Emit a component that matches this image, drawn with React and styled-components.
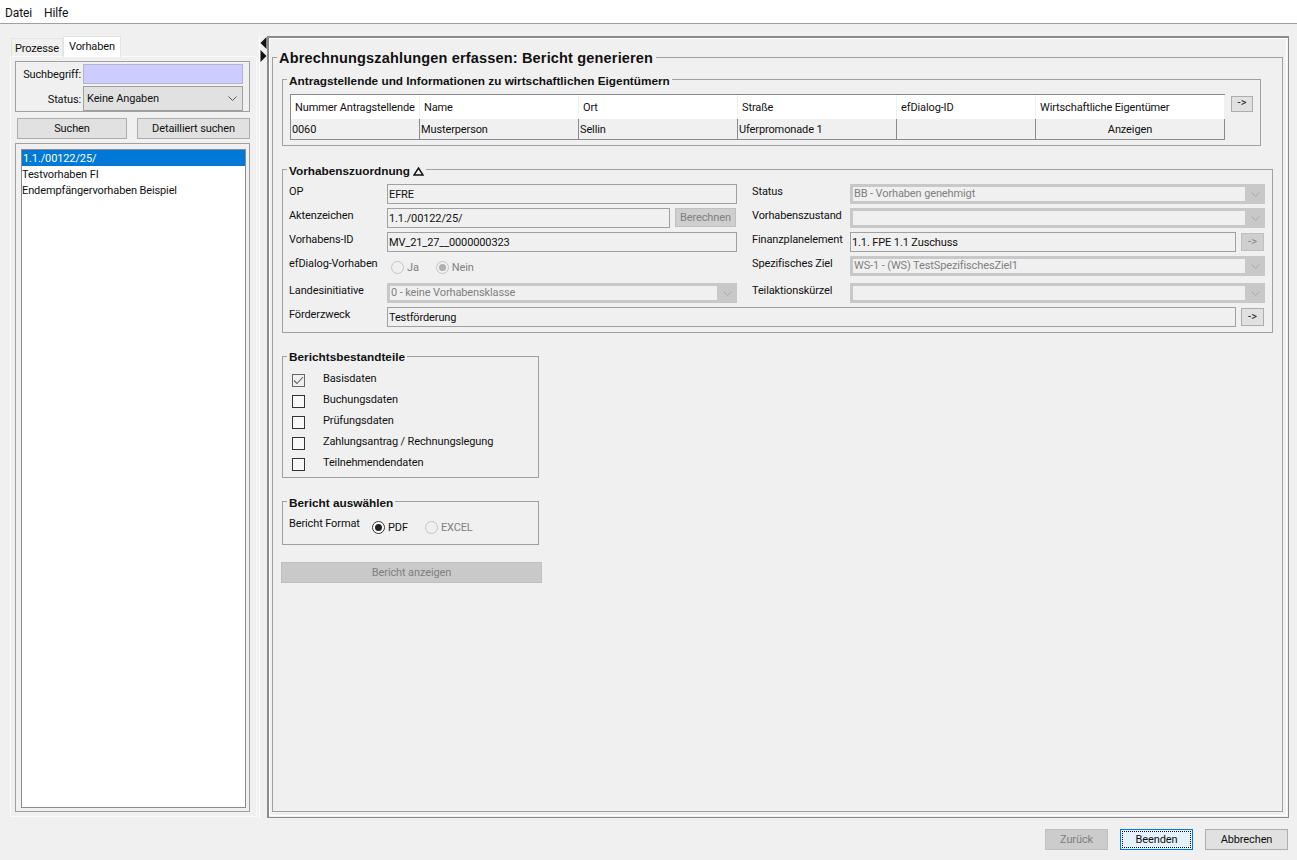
import React from 'react';
import styled, { createGlobalStyle } from 'styled-components';

const COLORS = {
  page: '#f0f0f0',
  line: '#a0a0a0',
  dark: '#8a8a90',
  field: '#c8c8c8',
  control: '#e1e1e1',
  muted: '#808080',
  text: '#111',
};

const TABLE_COLUMNS = [
  { id: 'nummer', label: 'Nummer Antragstellende', value: '0060', width: 129 },
  { id: 'name', label: 'Name', value: 'Musterperson', width: 159 },
  { id: 'ort', label: 'Ort', value: 'Sellin', width: 159 },
  { id: 'strasse', label: 'Straße', value: 'Uferpromonade 1', width: 159 },
  { id: 'dialog', label: 'efDialog-ID', value: '', width: 139 },
  { id: 'eigentuemer', label: 'Wirtschaftliche Eigentümer', value: 'Anzeigen', width: 189, center: true },
];

const REPORT_PARTS = [
  { label: 'Basisdaten', checked: true },
  { label: 'Buchungsdaten' },
  { label: 'Prüfungsdaten' },
  { label: 'Zahlungsantrag / Rechnungslegung' },
  { label: 'Teilnehmendendaten' },
];

const GlobalStyle = createGlobalStyle`
  html, body {
    margin: 0;
    padding: 0;
    background: ${COLORS.page};
  }
  body {
    font-family: Roboto, 'Liberation Sans', Arial, sans-serif;
    font-size: 11px;
    letter-spacing: -0.12px;
    color: ${COLORS.text};
  }
`;

const Chevron = ({ color = '#555' }) => (
  <svg width="9" height="5" viewBox="0 0 9 5" fill="none">
    <path d="M0.5 0.5 L4.5 4.5 L8.5 0.5" stroke={color} strokeWidth="1" />
  </svg>
);

const Check = () => (
  <svg width="11" height="9" viewBox="0 0 11 9" fill="none">
    <path d="M1 4.5 L4 7.5 L10 1" stroke="#606060" strokeWidth="1.1" />
  </svg>
);

const Delta = () => (
  <svg width="11" height="9" viewBox="0 0 11 9" fill="none">
    <path d="M5.5 1 L10 8 L1 8 Z" stroke="#111" strokeWidth="1.4" />
  </svg>
);

const Select = ({ value }) => (
  <SelectBox>
    <SelectValue>{value}</SelectValue>
    <SelectArrow>
      <Chevron color="#a8a8a8" />
    </SelectArrow>
  </SelectBox>
);

const Radio = ({ label, checked, disabled }) => (
  <RadioLabel disabled={disabled}>
    <RadioCircle disabled={disabled}>{checked && <RadioDot disabled={disabled} />}</RadioCircle>
    {label}
  </RadioLabel>
);

const App = () => (
  <Page>
    <GlobalStyle />
    <MenuBar>
      <MenuItem>Datei</MenuItem>
      <MenuItem>Hilfe</MenuItem>
    </MenuBar>

    <Main>
      <Sidebar>
        <Tabs>
          <Tab width={52}>Prozesse</Tab>
          <Tab width={58} active>Vorhaben</Tab>
        </Tabs>
        <TabBody>
          <SearchBox>
            <SearchRow>
              <SearchLabel>Suchbegriff:</SearchLabel>
              <SearchInput />
            </SearchRow>
            <SearchRow>
              <SearchLabel>Status:</SearchLabel>
              <StatusSelect>
                Keine Angaben
                <Chevron />
              </StatusSelect>
            </SearchRow>
          </SearchBox>
          <SearchButtons>
            <SideButton>Suchen</SideButton>
            <SideButton>Detailliert suchen</SideButton>
          </SearchButtons>
          <ListFrame>
            <List>
              <ListItem selected>1.1./00122/25/</ListItem>
              <ListItem>Testvorhaben FI</ListItem>
              <ListItem>Endempfängervorhaben Beispiel</ListItem>
            </List>
          </ListFrame>
        </TabBody>
      </Sidebar>

      <Splitter>
        <svg width="7" height="26" viewBox="0 0 7 26">
          <path d="M6.5 0 L6.5 12 L0.5 6 Z" fill="#111" />
          <path d="M0.5 13 L0.5 25 L6.5 19 Z" fill="#111" />
        </svg>
      </Splitter>

      <PageFrame>
        <PageInner>
          <TitledBox>
            <PageTitle>Abrechnungszahlungen erfassen: Bericht generieren</PageTitle>

            <OwnerGroup>
              <GroupTitle>Antragstellende und Informationen zu wirtschaftlichen Eigentümern</GroupTitle>
              <Table>
                <TableHead>
                  {TABLE_COLUMNS.map(({ id, label, width }) => (
                    <HeadCell key={id} style={{ width }}>{label}</HeadCell>
                  ))}
                </TableHead>
                <TableRow>
                  {TABLE_COLUMNS.map(({ id, value, width, center }) => (
                    <BodyCell key={id} center={center} style={{ width }}>{value}</BodyCell>
                  ))}
                </TableRow>
              </Table>
              <ArrowButton>-&gt;</ArrowButton>
            </OwnerGroup>

            <AssignGroup>
              <GroupTitle>Vorhabenszuordnung <Delta /></GroupTitle>
              <FormColumn>
                <FormRow>
                  <FieldLabel>OP</FieldLabel>
                  <TextField>EFRE</TextField>
                </FormRow>
                <FormRow>
                  <FieldLabel>Aktenzeichen</FieldLabel>
                  <TextField>1.1./00122/25/</TextField>
                  <CalcButton>Berechnen</CalcButton>
                </FormRow>
                <FormRow>
                  <FieldLabel>Vorhabens-ID</FieldLabel>
                  <TextField>MV_21_27__0000000323</TextField>
                </FormRow>
                <FormRow>
                  <FieldLabel>efDialog-Vorhaben</FieldLabel>
                  <RadioGroup>
                    <Radio label="Ja" disabled />
                    <Radio label="Nein" checked disabled />
                  </RadioGroup>
                </FormRow>
                <FormRow tall>
                  <FieldLabel>Landesinitiative</FieldLabel>
                  <Select value="0 - keine Vorhabensklasse" />
                </FormRow>
              </FormColumn>
              <FormColumn>
                <FormRow>
                  <FieldLabel>Status</FieldLabel>
                  <Select value="BB - Vorhaben genehmigt" />
                </FormRow>
                <FormRow>
                  <FieldLabel>Vorhabenszustand</FieldLabel>
                  <Select value="" />
                </FormRow>
                <FormRow>
                  <FieldLabel>Finanzplanelement</FieldLabel>
                  <TextField>1.1. FPE 1.1 Zuschuss</TextField>
                  <RowArrow disabled>-&gt;</RowArrow>
                </FormRow>
                <FormRow>
                  <FieldLabel>Spezifisches Ziel</FieldLabel>
                  <Select value="WS-1 - (WS) TestSpezifischesZiel1" />
                </FormRow>
                <FormRow tall>
                  <FieldLabel>Teilaktionskürzel</FieldLabel>
                  <Select value="" />
                </FormRow>
              </FormColumn>
              <PurposeRow>
                <FieldLabel>Förderzweck</FieldLabel>
                <TextField>Testförderung</TextField>
                <RowArrow>-&gt;</RowArrow>
              </PurposeRow>
            </AssignGroup>

            <PartsGroup>
              <GroupTitle>Berichtsbestandteile</GroupTitle>
              {REPORT_PARTS.map(({ label, checked }) => (
                <PartRow key={label}>
                  <CheckBox checked={checked}>{checked && <Check />}</CheckBox>
                  <PartLabel>{label}</PartLabel>
                </PartRow>
              ))}
            </PartsGroup>

            <FormatGroup>
              <GroupTitle>Bericht auswählen</GroupTitle>
              <FormatLabel>Bericht Format</FormatLabel>
              <FormatOptions>
                <Radio label="PDF" checked />
                <Radio label="EXCEL" disabled />
              </FormatOptions>
            </FormatGroup>

            <ReportButton>Bericht anzeigen</ReportButton>
          </TitledBox>
        </PageInner>
      </PageFrame>
    </Main>

    <Footer>
      <FooterButton width={63} disabled>Zurück</FooterButton>
      <FooterButton width={73} primary>
        <FocusRing>Beenden</FocusRing>
      </FooterButton>
      <FooterButton width={83}>Abbrechen</FooterButton>
    </Footer>
  </Page>
);

const Page = styled.div`
  width: 1297px;
  height: 860px;
  display: flex;
  flex-direction: column;
  overflow: hidden;
  background: ${COLORS.page};
`;

const MenuBar = styled.div`
  height: 24px;
  flex: none;
  display: flex;
  align-items: center;
  gap: 12px;
  padding: 3px 0 0 5px;
  box-sizing: border-box;
  background: #fff;
  border-bottom: 1px solid ${COLORS.line};
`;

const MenuItem = styled.span`
  font-size: 12px;
`;

const Main = styled.div`
  flex: none;
  height: 794px;
  display: flex;
  padding: 12px 0 0 10px;
  box-sizing: border-box;
`;

const Sidebar = styled.div`
  width: 247px;
  flex: none;
  display: flex;
  flex-direction: column;
  padding-bottom: 1px;
  box-sizing: border-box;
`;

const Tabs = styled.div`
  height: 20px;
  flex: none;
  display: flex;
  align-items: flex-end;
  padding-left: 1px;
`;

const Tab = styled.div`
  box-sizing: border-box;
  width: ${props => props.width}px;
  height: ${props => (props.active ? '21px' : '18px')};
  margin-bottom: ${props => (props.active ? '-1px' : '0')};
  padding-top: 3px;
  position: relative;
  z-index: 1;
  text-align: center;
  background: ${props => (props.active ? '#fff' : COLORS.page)};
  border: 1px solid #e4e4e4;
  border-bottom: none;
`;

const TabBody = styled.div`
  flex: 1;
  min-height: 0;
  display: flex;
  flex-direction: column;
  padding: 4px 6px 4px 4px;
  border: 1px solid #fbfbfb;
`;

const SearchBox = styled.div`
  flex: none;
  display: flex;
  flex-direction: column;
  gap: 2px;
  padding: 2px 6px 0 0;
  border: 1px solid ${COLORS.line};
`;

const SearchRow = styled.div`
  display: flex;
  align-items: center;
  gap: 2px;
`;

const SearchLabel = styled.span`
  width: 65px;
  padding-top: 1px;
  text-align: right;
`;

const SearchInput = styled.div`
  flex: 1;
  height: 20px;
  box-sizing: border-box;
  background: #ccccff;
  border: 1px solid #b4b4c8;
`;

const StatusSelect = styled.div`
  flex: 1;
  height: 25px;
  box-sizing: border-box;
  display: flex;
  align-items: center;
  justify-content: space-between;
  padding: 0 5px 0 3px;
  background: ${COLORS.control};
  border: 1px solid ${COLORS.line};
`;

const SearchButtons = styled.div`
  flex: none;
  display: flex;
  justify-content: space-between;
  margin: 6px 0 4px;
  padding-left: 2px;
`;

const SideButton = styled.button`
  font: inherit;
  letter-spacing: inherit;
  color: ${COLORS.text};
  height: 21px;
  width: 110px;
  padding: 0;
  background: ${COLORS.control};
  border: 1px solid #adadad;

  & + & {
    width: 113px;
  }
`;

const ListFrame = styled.div`
  flex: 1;
  min-height: 0;
  display: flex;
  padding: 5px 3px 3px 5px;
  border: 1px solid ${COLORS.line};
`;

const List = styled.div`
  flex: 1;
  background: #fff;
  border: 1px solid ${COLORS.dark};
`;

const ListItem = styled.div`
  height: 16px;
  line-height: 18px;
  padding-left: ${props => (props.selected ? '1px' : '0')};
  color: ${props => (props.selected ? '#fff' : COLORS.text)};
  background: ${props => (props.selected ? '#0078d7' : 'transparent')};
`;

const Splitter = styled.div`
  width: 10px;
  flex: none;
  padding: 1px 0 0 3px;
  box-sizing: border-box;
  line-height: 0;
  background: linear-gradient(#fff, #fff) 2px 0 / 1px 100% no-repeat;
`;

const PageFrame = styled.div`
  width: 1022px;
  flex: none;
  box-sizing: border-box;
  display: flex;
  padding: 0 1px 1px 0;
  border-style: solid;
  border-color: ${COLORS.dark};
  border-width: 2px 1px 1px 2px;
`;

const PageInner = styled.div`
  flex: 1;
  min-width: 0;
  display: flex;
  padding: 18px 3px 3px 2px;
  border: 1px solid #fff;
`;

const TitledBox = styled.div`
  position: relative;
  flex: 1;
  min-width: 0;
  display: flex;
  flex-direction: column;
  align-items: flex-start;
  padding: 21px 0 0 9px;
  border: 1px solid ${COLORS.line};
`;

const PageTitle = styled.div`
  position: absolute;
  top: -8px;
  left: 4px;
  padding: 0 3px 0 2px;
  background: ${COLORS.page};
  font-family: 'Liberation Sans', Arial, sans-serif;
  font-size: 14.5px;
  font-weight: 700;
  line-height: 16px;
  letter-spacing: 0.17px;
  white-space: nowrap;
`;

const GroupBox = styled.div`
  position: relative;
  flex: none;
  box-sizing: border-box;
  border: 1px solid ${COLORS.line};
`;

const GroupTitle = styled.div`
  position: absolute;
  top: -6px;
  left: 4px;
  padding: 0 2px;
  display: flex;
  align-items: center;
  gap: 3px;
  background: ${COLORS.page};
  font-family: 'Liberation Sans', Arial, sans-serif;
  font-size: 11.8px;
  font-weight: 700;
  line-height: 14px;
  letter-spacing: 0;
  white-space: nowrap;
`;

const OwnerGroup = styled(GroupBox)`
  width: 979px;
  height: 67px;
  display: flex;
  align-items: flex-start;
  gap: 6px;
  padding: 14px 0 0 7px;
`;

const Table = styled.div`
  flex: none;
  border: 1px solid ${COLORS.dark};
  border-right: none;
`;

const TableHead = styled.div`
  display: flex;
  height: 24px;
  background: #fff;
`;

const HeadCell = styled.div`
  flex: none;
  box-sizing: border-box;
  padding-left: 4px;
  line-height: 26px;
  white-space: nowrap;
  border-right: 1px solid ${COLORS.page};
`;

const TableRow = styled.div`
  display: flex;
  height: 20px;
`;

const BodyCell = styled.div`
  flex: none;
  box-sizing: border-box;
  padding-left: ${props => (props.center ? '0' : '1px')};
  line-height: 21px;
  text-align: ${props => (props.center ? 'center' : 'left')};
  white-space: nowrap;
  border-right: 1px solid ${COLORS.dark};
`;

const ArrowButton = styled.button`
  flex: none;
  font: inherit;
  color: ${COLORS.text};
  width: 22px;
  height: 16px;
  margin-top: 2px;
  padding: 0 0 2px;
  line-height: 10px;
  background: ${COLORS.control};
  border: 1px solid #adadad;
`;

const AssignGroup = styled(GroupBox)`
  width: 991px;
  height: 164px;
  margin-top: 23px;
  display: grid;
  grid-template-columns: 448px 513px;
  column-gap: 15px;
  row-gap: 4px;
  align-content: start;
  padding: 14px 0 0 6px;
`;

const FormColumn = styled.div`
  display: flex;
  flex-direction: column;
  gap: 4px;
`;

const FormRow = styled.div`
  display: flex;
  height: 20px;
  align-items: flex-start;
  margin-top: ${props => (props.tall ? '3px' : '0')};
`;

const PurposeRow = styled.div`
  grid-column: 1 / -1;
  display: flex;
  align-items: flex-start;
  height: 20px;
`;

const FieldLabel = styled.span`
  flex: none;
  width: 98px;
  padding-top: 1px;
  line-height: 14px;
  white-space: nowrap;
`;

const TextField = styled.div`
  flex: 1;
  min-width: 0;
  height: 20px;
  box-sizing: border-box;
  padding-left: 1px;
  line-height: 19px;
  background: ${COLORS.page};
  border: 1px solid ${COLORS.line};
`;

const CalcButton = styled.button`
  font: inherit;
  letter-spacing: inherit;
  flex: none;
  width: 61px;
  height: 19px;
  margin: 0 1px 0 5px;
  padding: 0;
  color: ${COLORS.muted};
  background: #cfcfcf;
  border: 1px solid #c0c0c0;
`;

const RowArrow = styled.button`
  font: inherit;
  flex: none;
  width: 23px;
  height: 18px;
  margin: 1px 1px 0 5px;
  padding: 0 0 1px;
  color: ${props => (props.disabled ? COLORS.muted : COLORS.text)};
  background: ${props => (props.disabled ? '#cfcfcf' : COLORS.control)};
  border: 1px solid ${props => (props.disabled ? '#c0c0c0' : '#adadad')};
`;

const SelectBox = styled.div`
  flex: 1;
  min-width: 0;
  height: 20px;
  box-sizing: border-box;
  display: flex;
  align-items: center;
  background: ${COLORS.field};
  padding-left: 3px;
`;

const SelectValue = styled.div`
  flex: 1;
  height: 14px;
  padding-left: 1px;
  line-height: 14px;
  color: ${COLORS.muted};
  background: ${COLORS.page};
`;

const SelectArrow = styled.div`
  width: 20px;
  flex: none;
  display: flex;
  justify-content: center;
  line-height: 0;
`;

const RadioGroup = styled.div`
  display: flex;
  gap: 17px;
  padding: 5px 0 0 4px;
`;

const RadioLabel = styled.label`
  display: inline-flex;
  align-items: center;
  gap: 3px;
  color: ${props => (props.disabled ? COLORS.muted : COLORS.text)};
`;

const RadioCircle = styled.span`
  width: 13px;
  height: 13px;
  box-sizing: border-box;
  display: inline-flex;
  align-items: center;
  justify-content: center;
  border-radius: 50%;
  background: ${props => (props.disabled ? COLORS.page : '#fff')};
  border: 1px solid ${props => (props.disabled ? '#c4c4c4' : '#333')};
`;

const RadioDot = styled.span`
  width: 7px;
  height: 7px;
  border-radius: 50%;
  background: ${props => (props.disabled ? '#b0b0b0' : '#222')};
`;

const PartsGroup = styled(GroupBox)`
  width: 257px;
  height: 122px;
  margin-top: 23px;
  display: flex;
  flex-direction: column;
  gap: 8px;
  padding: 15px 0 0 9px;

  ${GroupTitle} {
    top: -7px;
  }
`;

const PartRow = styled.div`
  height: 13px;
  display: flex;
  align-items: flex-start;
`;

const CheckBox = styled.span`
  width: 13px;
  height: 13px;
  flex: none;
  margin-top: 2px;
  box-sizing: border-box;
  display: inline-flex;
  align-items: center;
  justify-content: center;
  background: ${props => (props.checked ? COLORS.page : '#f8f8f8')};
  border: 1px solid ${props => (props.checked ? '#666' : '#333')};
`;

const PartLabel = styled.span`
  margin-left: 18px;
  line-height: 13px;
  white-space: nowrap;
`;

const FormatGroup = styled(GroupBox)`
  width: 257px;
  height: 44px;
  margin-top: 23px;
  display: flex;
  align-items: flex-start;
  padding: 14px 0 0 6px;
`;

const FormatLabel = styled.span`
  flex: none;
  width: 83px;
  line-height: 14px;
  padding-top: 1px;
  white-space: nowrap;
`;

const FormatOptions = styled.div`
  display: flex;
  gap: 17px;
  padding-top: 5px;
`;

const ReportButton = styled.button`
  font: inherit;
  letter-spacing: inherit;
  flex: none;
  width: 261px;
  height: 21px;
  margin: 17px 0 0 -1px;
  padding: 0;
  color: ${COLORS.muted};
  background: #c9c9c9;
  border: 1px solid #c0c0c0;
`;

const Footer = styled.div`
  flex: 1;
  display: flex;
  justify-content: flex-end;
  gap: 12px;
  padding: 11px 9px 0 0;
`;

const FooterButton = styled.button`
  font: inherit;
  letter-spacing: inherit;
  width: ${props => props.width}px;
  height: 21px;
  padding: ${props => (props.primary ? '1px' : '0')};
  color: ${props => (props.disabled ? COLORS.muted : COLORS.text)};
  background: ${props => (props.primary ? '#e5f1fb' : props.disabled ? '#cccccc' : COLORS.control)};
  border: 1px solid ${props => (props.primary ? '#0078d7' : props.disabled ? '#bfbfbf' : '#adadad')};
`;

const FocusRing = styled.span`
  display: flex;
  align-items: center;
  justify-content: center;
  height: 100%;
  box-sizing: border-box;
  border: 1px dotted #111;
`;

export default App;
